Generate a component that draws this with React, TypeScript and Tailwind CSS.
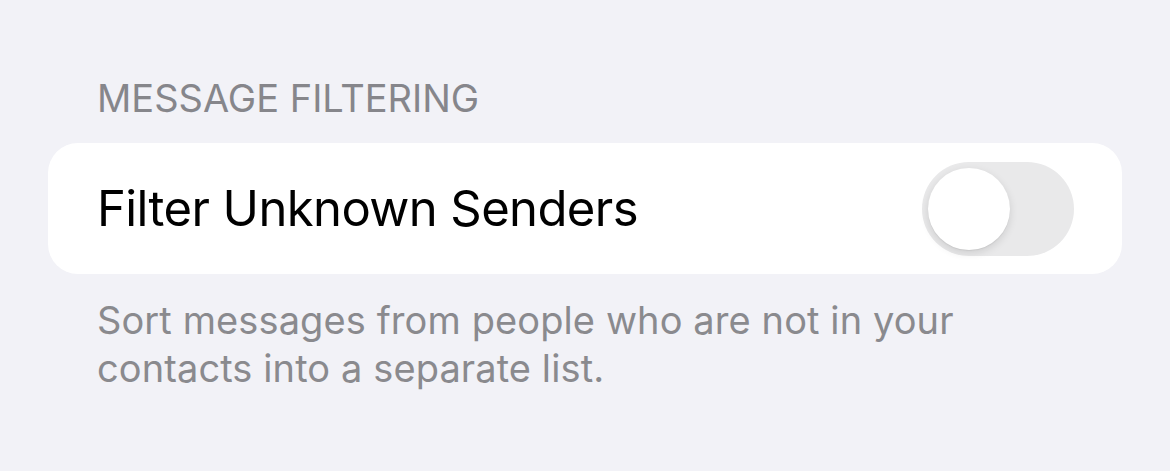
import React, { useState } from 'react';

const font = { fontFamily: 'Inter, "Noto Sans", sans-serif' };

export default function App() {
  const [on, setOn] = useState(false);

  return (
    <div className="min-h-[471px] w-[1170px] bg-[#f2f2f7] pt-[76px]" style={font}>
      <div className="px-[97px] text-[38px] leading-[44px] tracking-[0px] text-[#86868b]">MESSAGE FILTERING</div>

      <div className="mx-[48px] mt-[23px] flex h-[131px] items-center justify-between rounded-[30px] bg-white pl-[49px] pr-[48px]">
        <span className="text-[49px] leading-[60px] text-black tracking-[-0.6px]">Filter Unknown Senders</span>
        <button
          onClick={() => setOn(!on)}
          className={`relative h-[94px] w-[152px] rounded-full transition-colors ${on ? 'bg-[#34c759]' : 'bg-[#e9e9ea]'}`}
        >
          <span
            className={`absolute top-[6px] h-[82px] w-[82px] rounded-full bg-white shadow-[0_3px_8px_rgba(0,0,0,0.12),0_1px_1px_rgba(0,0,0,0.06)] transition-all ${on ? 'left-[64px]' : 'left-[6px]'}`}
          />
        </button>
      </div>

      <p className="mt-[22px] px-[97px] text-[38px] leading-[48px] tracking-[0.1px] text-[#8a8a8e]">
        Sort messages from people who are not in your
        <br />
        contacts into a separate list.
      </p>
    </div>
  );
}
